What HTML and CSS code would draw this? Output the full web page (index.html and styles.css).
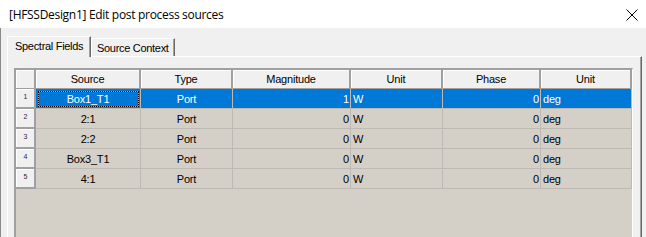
FILE: index.html
```html
<!DOCTYPE html>
<html>
<head>
<meta charset="utf-8">
<link rel="stylesheet" href="styles.css">
</head>
<body>
<div class="window">
  <div class="titlebar">
    <span class="title">[HFSSDesign1] Edit post process sources</span>
    <svg class="close" width="12" height="12" viewBox="0 0 12 12"><path d="M0.5 0.5 L11.5 11.5 M11.5 0.5 L0.5 11.5" stroke="#000" stroke-width="1" fill="none"/></svg>
  </div>
  <div class="client">
    <div class="tabs">
      <div class="tab active">Spectral Fields</div>
      <div class="tab">Source Context</div>
    </div>
    <div class="panel">
      <div class="grid">
        <div class="hcell corner"></div>
        <div class="hcell">Source</div>
        <div class="hcell">Type</div>
        <div class="hcell">Magnitude</div>
        <div class="hcell">Unit</div>
        <div class="hcell">Phase</div>
        <div class="hcell">Unit</div>

        <div class="rh">1</div>
        <div class="cell c sel focus">Box1_T1</div>
        <div class="cell c sel">Port</div>
        <div class="cell r sel">1</div>
        <div class="cell l sel">W</div>
        <div class="cell r sel">0</div>
        <div class="cell l sel">deg</div>

        <div class="rh">2</div>
        <div class="cell c">2:1</div>
        <div class="cell c">Port</div>
        <div class="cell r">0</div>
        <div class="cell l">W</div>
        <div class="cell r">0</div>
        <div class="cell l">deg</div>

        <div class="rh">3</div>
        <div class="cell c">2:2</div>
        <div class="cell c">Port</div>
        <div class="cell r">0</div>
        <div class="cell l">W</div>
        <div class="cell r">0</div>
        <div class="cell l">deg</div>

        <div class="rh">4</div>
        <div class="cell c">Box3_T1</div>
        <div class="cell c">Port</div>
        <div class="cell r">0</div>
        <div class="cell l">W</div>
        <div class="cell r">0</div>
        <div class="cell l">deg</div>

        <div class="rh">5</div>
        <div class="cell c">4:1</div>
        <div class="cell c">Port</div>
        <div class="cell r">0</div>
        <div class="cell l">W</div>
        <div class="cell r">0</div>
        <div class="cell l">deg</div>
      </div>
    </div>
  </div>
</div>
</body>
</html>
```

FILE: styles.css
```css
html, body {
  margin: 0;
  padding: 0;
  width: 646px;
  height: 237px;
  overflow: hidden;
  background: #f0f0f0;
}

.window {
  width: 646px;
  height: 237px;
  display: flex;
  flex-direction: column;
  font-family: "Liberation Sans", Arial, sans-serif;
  font-size: 11px;
  color: #000;
}

.titlebar {
  height: 28px;
  flex: none;
  background: #ffffff;
  display: flex;
  align-items: center;
  justify-content: space-between;
  padding: 0 8px 0 9px;
  box-sizing: border-box;
}

.title {
  font-family: "Open Sans", "Liberation Sans", sans-serif;
  font-size: 12px;
  color: #000;
  letter-spacing: -0.3px;
}

.close {
  display: block;
  margin-top: 2px;
}

.client {
  flex: 1;
  display: flex;
  flex-direction: column;
  border-left: 1px solid #8a8a8a;
  padding: 8px 4px 0 6px;
  min-height: 0;
}

.tabs {
  display: flex;
  align-items: flex-end;
  height: 20px;
  flex: none;
}

.tab {
  box-sizing: border-box;
  height: 18px;
  width: 84px;
  background: #f0f0f0;
  border-top: 1px solid #ffffff;
  border-left: 1px solid #ffffff;
  border-right: 1px solid #696969;
  box-shadow: inset -1px 0 0 #a0a0a0;
  padding: 2px 0 0 5px;
  white-space: nowrap;
  line-height: 14px;
  letter-spacing: -0.3px;
}

.tab.active {
  height: 21px;
  margin-bottom: -1px;
  position: relative;
  z-index: 1;
  padding: 2px 0 0 7px;
}

.panel {
  flex: 1;
  min-height: 0;
  background: #f0f0f0;
  border-top: 1px solid #ffffff;
  border-left: 1px solid #ffffff;
  border-right: 1px solid #696969;
  box-shadow: inset -1px 0 0 #a0a0a0;
  padding: 11px 8px 0 6px;
}

.grid {
  display: grid;
  grid-template-columns: 20px 105px 92px 118px 92px 98px 91px;
  grid-auto-rows: 20px;
  grid-template-rows: 19px;
  align-content: start;
  background: #d4d0c8;
  border-top: 2px solid #a0a0a0;
  border-left: 2px solid #a0a0a0;
  border-right: 1px solid #ffffff;
  border-bottom: 1px solid #ffffff;
  height: 168px;
  letter-spacing: -0.2px;
}

.hcell {
  box-sizing: border-box;
  background: #f0f0f0;
  border-right: 2px solid #a0a0a0;
  border-bottom: 1px solid #a0a0a0;
  box-shadow: inset 1px 1px 0 #ffffff;
  text-align: center;
  line-height: 18px;
  white-space: nowrap;
  overflow: hidden;
}

.rh {
  box-sizing: border-box;
  background: #f0f0f0;
  border-right: 2px solid #a0a0a0;
  border-bottom: 2px solid #a0a0a0;
  box-shadow: inset 1px 1px 0 #ffffff;
  font-size: 7px;
  color: #3a1a30;
  text-align: center;
  line-height: 16px;
  padding-left: 1px;
  letter-spacing: 0;
}

.cell {
  box-sizing: border-box;
  border-right: 1px solid #bdbab3;
  border-bottom: 1px solid #bdbab3;
  line-height: 20px;
  white-space: nowrap;
  overflow: hidden;
  font-size: 11px;
}

.cell.c { text-align: center; }
.cell.r { text-align: right; padding-right: 1px; }
.cell.l { text-align: left; padding-left: 2px; }

.cell.sel {
  background: #0078d7;
  color: #ffffff;
}

.cell.focus {
  position: relative;
}

.cell.focus::before {
  content: "";
  position: absolute;
  left: 2px;
  top: 2px;
  right: 1px;
  bottom: 1px;
  border: 1px solid #ff8c1a;
}

.cell.focus::after {
  content: "";
  position: absolute;
  left: 2px;
  top: 2px;
  right: 1px;
  bottom: 1px;
  border: 1px dotted #000000;
}
```
